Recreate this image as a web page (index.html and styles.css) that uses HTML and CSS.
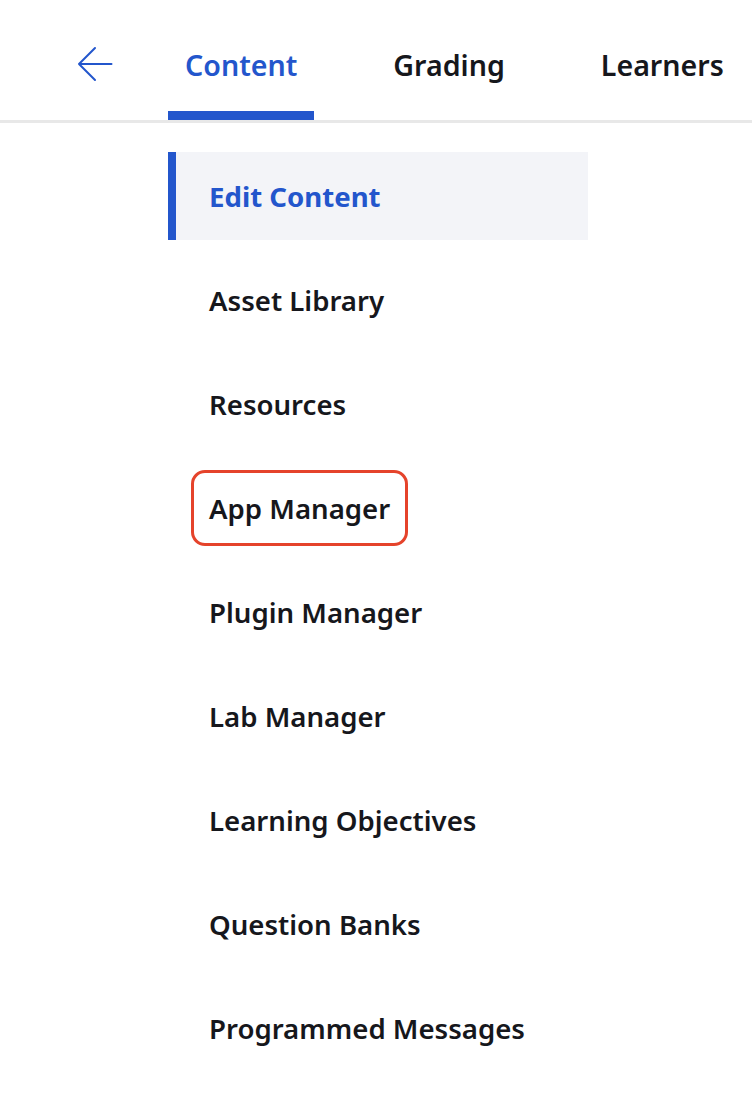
FILE: index.html
```html
<!DOCTYPE html>
<html lang="en">
<head>
<meta charset="utf-8">
<title>Course navigation</title>
<link rel="stylesheet" href="styles.css">
</head>
<body>
<header class="topbar">
  <a class="back" href="#" aria-label="Back">
    <svg width="36" height="36" viewBox="0 0 36 36" aria-hidden="true">
      <path d="M34.5 18 H2 M18 2 L2 18 L18 34" fill="none" stroke="#2356cc" stroke-width="2" stroke-linecap="round" stroke-linejoin="round"/>
    </svg>
  </a>
  <nav class="tabs">
    <a class="tab active" href="#">Content</a>
    <a class="tab" href="#">Grading</a>
    <a class="tab" href="#">Learners</a>
  </nav>
</header>
<ul class="menu">
  <li class="item active">Edit Content</li>
  <li class="item">Asset Library</li>
  <li class="item">Resources</li>
  <li class="item"><span class="marked">App Manager</span></li>
  <li class="item">Plugin Manager</li>
  <li class="item">Lab Manager</li>
  <li class="item">Learning Objectives</li>
  <li class="item">Question Banks</li>
  <li class="item">Programmed Messages</li>
</ul>
</body>
</html>
```
FILE: styles.css
```css
* { box-sizing: border-box; }
html, body {
  margin: 0;
  padding: 0;
  background: #ffffff;
}
body {
  font-family: "Noto Sans", "Open Sans", sans-serif;
  color: #16171c;
  width: 752px;
  height: 1110px;
  overflow: hidden;
}
.topbar {
  display: flex;
  align-items: stretch;
  height: 123px;
  border-bottom: 3px solid #e8e8e8;
}
.back {
  display: flex;
  align-items: center;
  margin-left: 77px;
  width: 91px;
  padding-top: 8px;
}
.back svg { display: block; }
.tabs {
  display: flex;
  gap: 62px;
}
.tab {
  display: flex;
  align-items: center;
  padding: 17px 17px 0;
  font-size: 28.6px;
  font-weight: 600;
  color: #16171c;
  text-decoration: none;
  border-bottom: 9px solid transparent;
  border-radius: 4px 4px 0 0;
}
.tab.active {
  color: #2356cc;
  border-bottom-color: #2356cc;
}
.menu {
  list-style: none;
  margin: 29px 0 0 168px;
  padding: 0;
  width: 420px;
  display: flex;
  flex-direction: column;
  gap: 16px;
}
.item {
  height: 88px;
  display: flex;
  align-items: center;
  padding-left: 41px;
  font-size: 27.6px;
  font-weight: 600;
  color: #16171c;
}
.item.active {
  background: #f3f4f8;
  border-left: 8px solid #2356cc;
  padding-left: 33px;
  color: #2356cc;
  font-weight: 700;
}
.marked {
  position: relative;
}
.marked::after {
  content: "";
  position: absolute;
  left: -18px;
  right: -18px;
  top: -19px;
  bottom: -19px;
  border: 3px solid #e5432b;
  border-radius: 14px;
}
```
